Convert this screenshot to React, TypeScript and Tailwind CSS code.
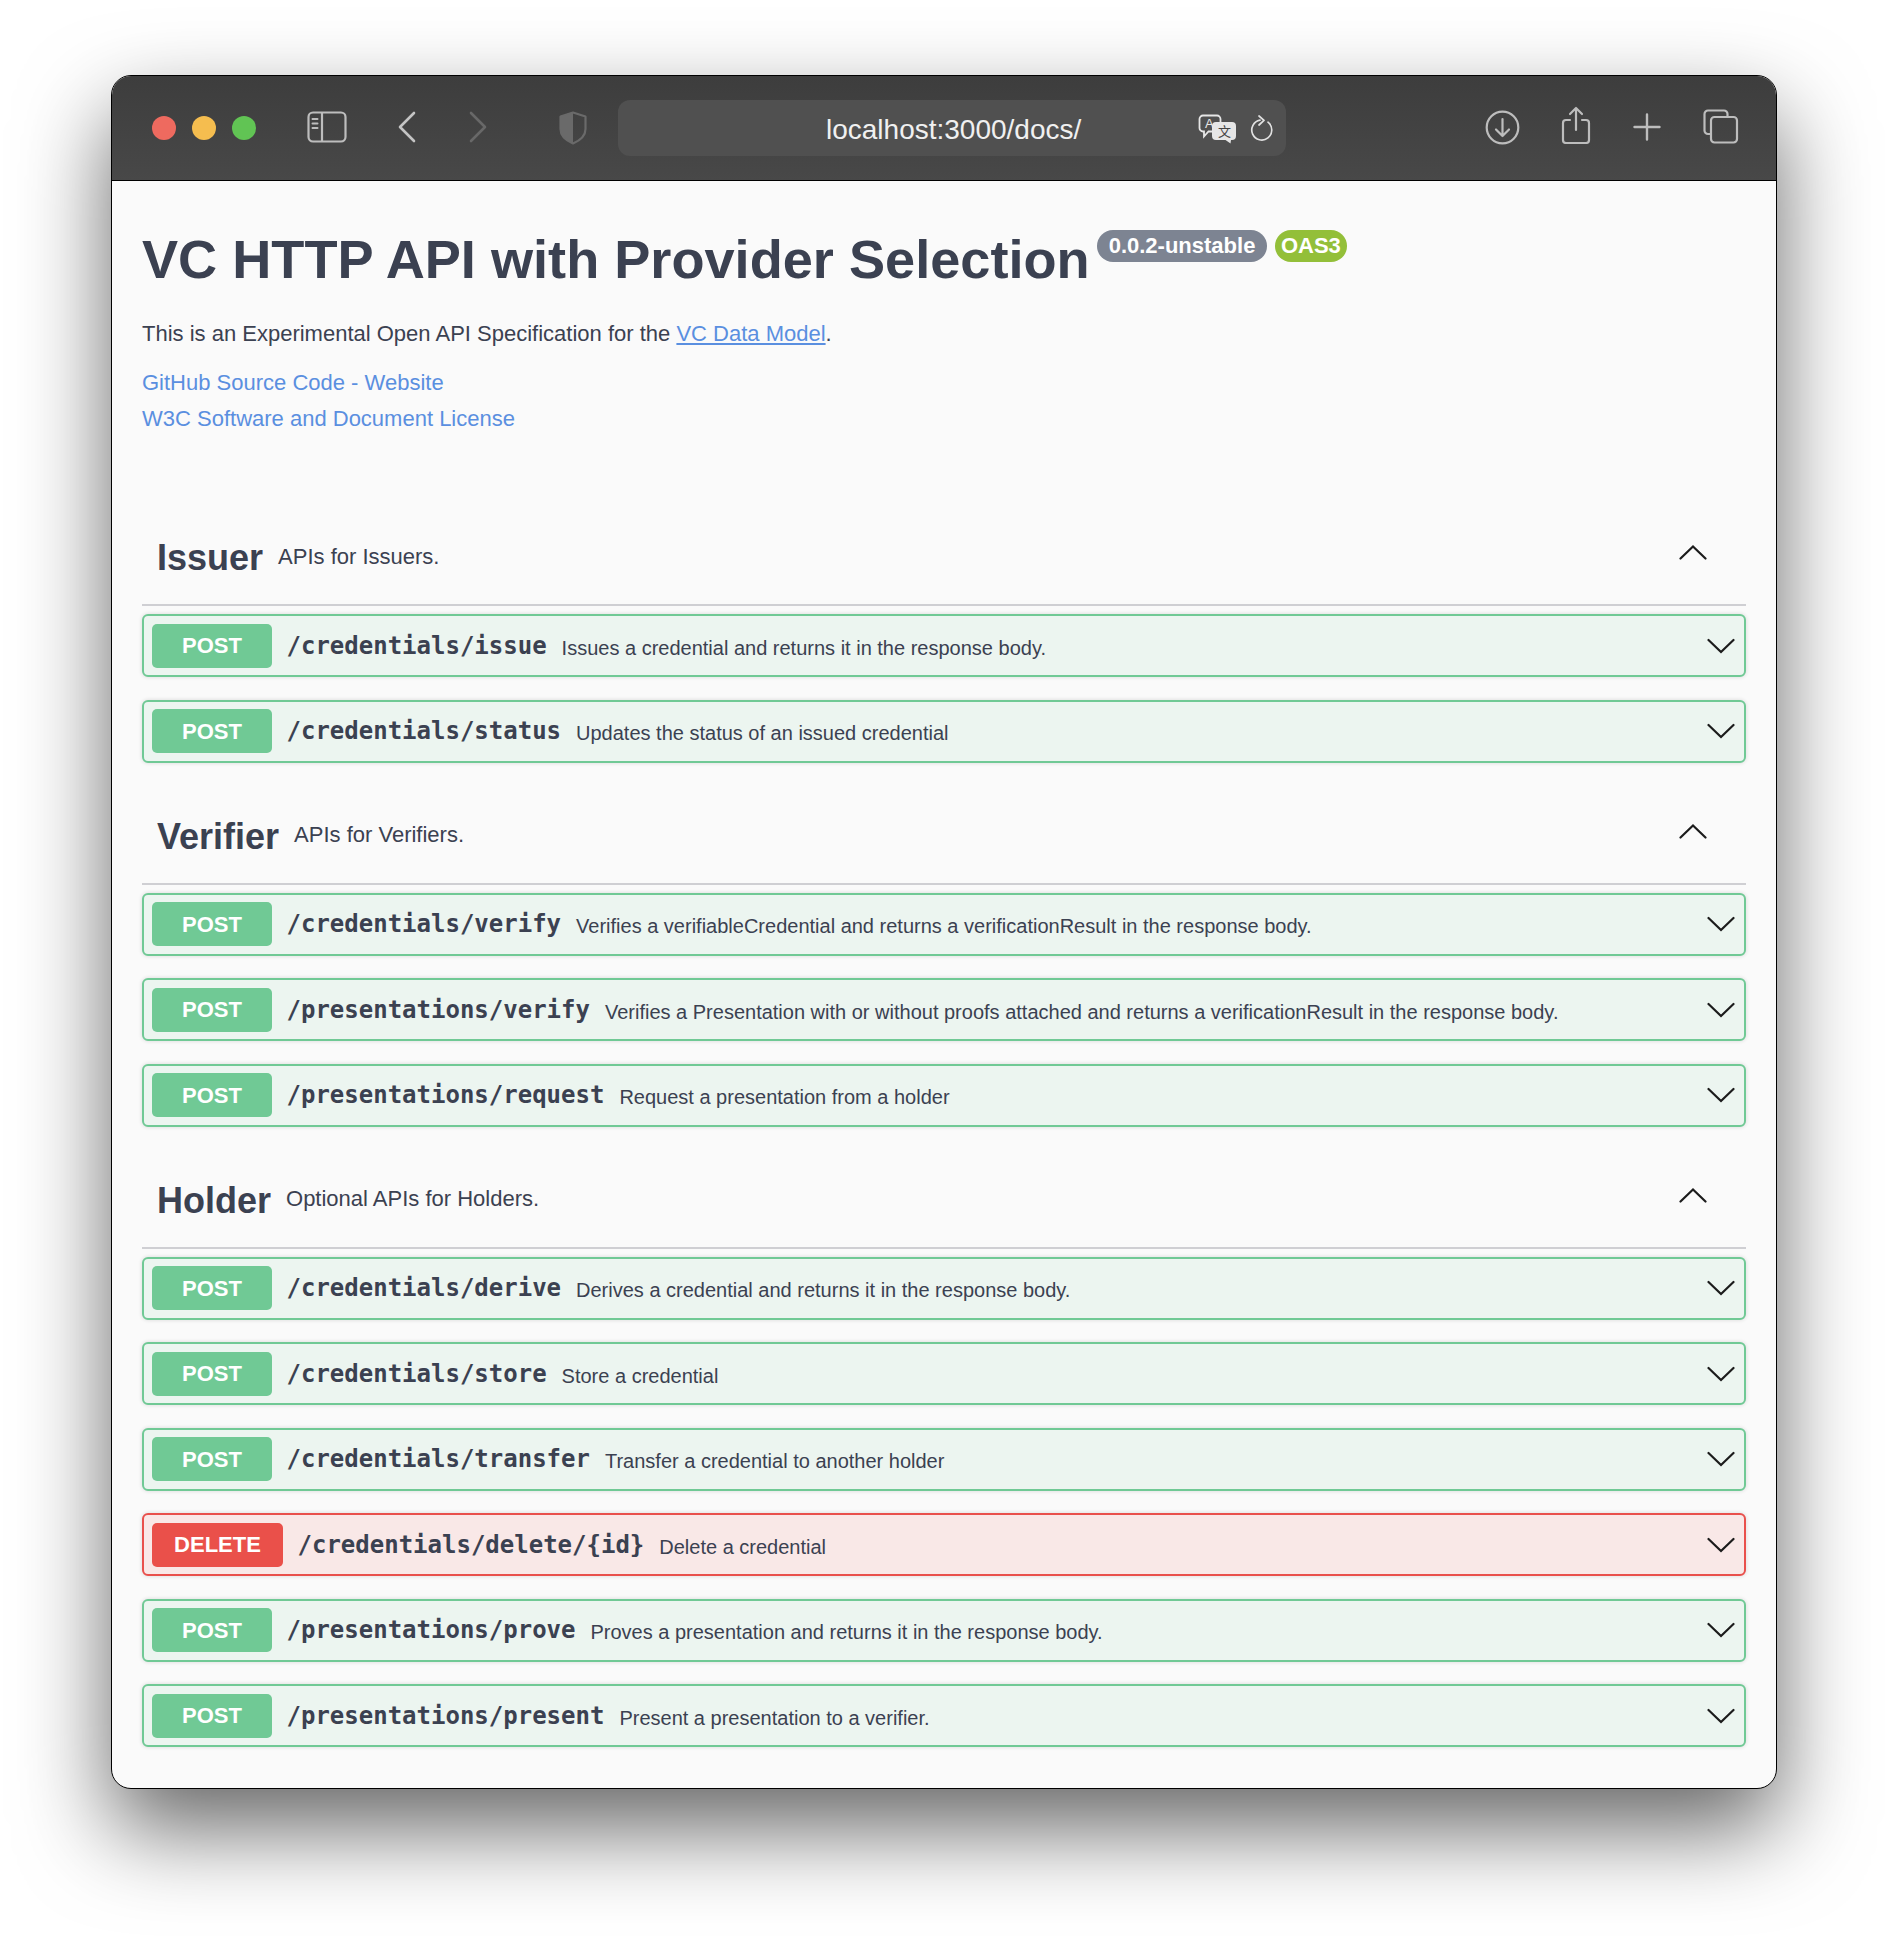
import React from "react";

const SANS = "font-['Liberation_Sans',Arial,sans-serif]";
const MONO = "font-['DejaVu_Sans_Mono',monospace]";

type Op = {
  method: "POST" | "DELETE";
  path: string;
  desc: string;
};

type Tag = {
  name: string;
  desc: string;
  ops: Op[];
};

const tags: Tag[] = [
  {
    name: "Issuer",
    desc: "APIs for Issuers.",
    ops: [
      { method: "POST", path: "/credentials/issue", desc: "Issues a credential and returns it in the response body." },
      { method: "POST", path: "/credentials/status", desc: "Updates the status of an issued credential" },
    ],
  },
  {
    name: "Verifier",
    desc: "APIs for Verifiers.",
    ops: [
      { method: "POST", path: "/credentials/verify", desc: "Verifies a verifiableCredential and returns a verificationResult in the response body." },
      { method: "POST", path: "/presentations/verify", desc: "Verifies a Presentation with or without proofs attached and returns a verificationResult in the response body." },
      { method: "POST", path: "/presentations/request", desc: "Request a presentation from a holder" },
    ],
  },
  {
    name: "Holder",
    desc: "Optional APIs for Holders.",
    ops: [
      { method: "POST", path: "/credentials/derive", desc: "Derives a credential and returns it in the response body." },
      { method: "POST", path: "/credentials/store", desc: "Store a credential" },
      { method: "POST", path: "/credentials/transfer", desc: "Transfer a credential to another holder" },
      { method: "DELETE", path: "/credentials/delete/{id}", desc: "Delete a credential" },
      { method: "POST", path: "/presentations/prove", desc: "Proves a presentation and returns it in the response body." },
      { method: "POST", path: "/presentations/present", desc: "Present a presentation to a verifier." },
    ],
  },
];

function Chevron({ up = false }: { up?: boolean }) {
  return (
    <svg width="28" height="16" viewBox="0 0 28 16" fill="none" stroke="#1c1c1c" strokeWidth="2.2" strokeLinecap="round">
      <path d={up ? "M1.5 14L14 2l12.5 12" : "M1.5 2L14 14 26.5 2"} />
    </svg>
  );
}

function ToolbarIcons() {
  return (
    <div className="flex items-center h-full">
      {/* traffic lights */}
      <div className="ml-[40px] w-[24px] h-[24px] rounded-full bg-[#ee6a5f]" />
      <div className="ml-[16px] w-[24px] h-[24px] rounded-full bg-[#f5bd4f]" />
      <div className="ml-[16px] w-[24px] h-[24px] rounded-full bg-[#61c454]" />

      {/* sidebar */}
      <svg className="ml-[51px] mb-[2px]" width="40" height="32" viewBox="0 0 40 32" fill="none" stroke="#bdbdbd" strokeWidth="2.2">
        <rect x="1.5" y="1.5" width="37" height="29" rx="4.5" />
        <path d="M15 1.5v29" />
        <path d="M5.5 8h5M5.5 12.5h5M5.5 17h5" strokeWidth="2" strokeLinecap="round" />
      </svg>

      {/* back / forward */}
      <svg className="ml-[50px] mb-[2px]" width="20" height="32" viewBox="0 0 20 32" fill="none" stroke="#c4c4c4" strokeWidth="2.6" strokeLinecap="round" strokeLinejoin="round">
        <path d="M17 2L3 16l14 14" />
      </svg>
      <svg className="ml-[50.5px] mb-[2px]" width="20" height="32" viewBox="0 0 20 32" fill="none" stroke="#686868" strokeWidth="2.6" strokeLinecap="round" strokeLinejoin="round">
        <path d="M3 2l14 14L3 30" />
      </svg>

      {/* shield */}
      <svg className="ml-[71.5px] mb-[1px]" width="28" height="34" viewBox="0 0 28 34" fill="none">
        <path d="M14 1.5L26.5 5.5V18c0 7-5.5 11.5-12.5 14.5C7 29.5 1.5 25 1.5 18V5.5z" stroke="#6a6a6a" strokeWidth="2.2" strokeLinejoin="round" />
        <path d="M14 1.5L1.5 5.5V18c0 7 5.5 11.5 12.5 14.5z" fill="#6a6a6a" />
      </svg>

      {/* address bar */}
      <div className="relative ml-[31px] w-[668px] h-[56px] rounded-[12px] bg-[#505050] flex items-center">
        <span className={`${SANS} absolute left-[208px] top-[12.5px] text-[28px] leading-[34px] text-[#f0f0f0] whitespace-nowrap`}>
          localhost:3000/docs/
        </span>
        <svg className="absolute left-[580px] top-[14px]" width="40" height="30" viewBox="0 0 40 30">
          <path d="M5 1.5h14a3.5 3.5 0 0 1 3.5 3.5v9a3.5 3.5 0 0 1-3.5 3.5H10.5L6 22.5v-5H5A3.5 3.5 0 0 1 1.5 14V5A3.5 3.5 0 0 1 5 1.5z" fill="none" stroke="#e6e6e6" strokeWidth="1.8" />
          <text x="7" y="14" fontSize="13" fill="#e6e6e6" fontFamily="Liberation Sans, sans-serif">A</text>
          <path d="M18 8h16a4 4 0 0 1 4 4v10a4 4 0 0 1-4 4h-1l-.5 3.5-5-3.5H18a4 4 0 0 1-4-4V12a4 4 0 0 1 4-4z" fill="#e6e6e6" />
          <text x="20" y="22" fontSize="13" fill="#444" fontFamily="Noto Sans CJK SC, sans-serif">文</text>
        </svg>
        <svg className="absolute left-[632px] top-[15px]" width="24" height="27" viewBox="0 0 24 27" fill="none" stroke="#e0e0e0" strokeWidth="1.7" strokeLinecap="round" strokeLinejoin="round">
          <path d="M10 5.2a10 10 0 1 0 8 2" />
          <path d="M9 1l5 4.4L9 10" />
        </svg>
      </div>

      {/* right icons */}
      <svg className="ml-[199px] mb-[2px]" width="35" height="35" viewBox="0 0 35 35" fill="none" stroke="#bdbdbd" strokeWidth="2.2" strokeLinecap="round" strokeLinejoin="round">
        <circle cx="17.5" cy="17.5" r="15.8" />
        <path d="M17.5 9v17M11 19.5l6.5 6.5 6.5-6.5" />
      </svg>
      <svg className="ml-[40.5px] mb-[6px]" width="30" height="38" viewBox="0 0 30 38" fill="none" stroke="#bdbdbd" strokeWidth="2.2" strokeLinecap="round" strokeLinejoin="round">
        <path d="M9 14H5a3 3 0 0 0-3 3v17a3 3 0 0 0 3 3h20a3 3 0 0 0 3-3V17a3 3 0 0 0-3-3h-4" />
        <path d="M15 24V2M9 8l6-6 6 6" />
      </svg>
      <svg className="ml-[42px] mb-[3px]" width="28" height="28" viewBox="0 0 28 28" fill="none" stroke="#bdbdbd" strokeWidth="2.4" strokeLinecap="round">
        <path d="M14 1.5v25M1.5 14h25" />
      </svg>
      <svg className="ml-[42.5px] mb-[3px]" width="36" height="35" viewBox="0 0 36 35" fill="none" stroke="#bdbdbd" strokeWidth="2.2">
        <path d="M7 25H5a3.5 3.5 0 0 1-3.5-3.5V5A3.5 3.5 0 0 1 5 1.5h16A3.5 3.5 0 0 1 24.5 5v2" />
        <rect x="8" y="8" width="26" height="25.5" rx="3.5" />
      </svg>
    </div>
  );
}

function OpRow({ op }: { op: Op }) {
  const isDelete = op.method === "DELETE";
  return (
    <div
      className={`h-[63px] rounded-[6px] border-2 flex items-center pl-[8px] pr-[9px] shadow-[0_0_4px_rgba(0,0,0,0.14)] ${
        isDelete ? "border-[#e9504c] bg-[#f9e8e7]" : "border-[#70c995] bg-[#ecf5f0]"
      }`}
    >
      <div
        className={`${SANS} h-[44px] rounded-[5px] flex items-center justify-center text-[22px] font-bold text-white ${
          isDelete ? "w-[131px] bg-[#ea504a]" : "w-[120px] bg-[#70c995]"
        }`}
      >
        {op.method}
      </div>
      <span className={`${MONO} ml-[14.5px] text-[24px] font-bold text-[#3b4151] whitespace-nowrap`}>{op.path}</span>
      <span className={`${SANS} ml-[15px] text-[20px] text-[#3b4151] whitespace-nowrap flex-1 translate-y-[2px]`}>{op.desc}</span>
      <Chevron />
    </div>
  );
}

function TagSection({ tag }: { tag: Tag }) {
  return (
    <section className="pt-[23.5px] pb-[22.5px]">
      <div className="h-[76px] border-b-2 border-[#cfcfd3] flex items-center pl-[15px] pr-[39px] pb-[18px]">
        <h4 className={`${SANS} text-[36px] font-bold text-[#3b4151]`}>{tag.name}</h4>
        <span className={`${SANS} ml-[15px] text-[22px] text-[#3b4151] flex-1 -translate-y-[2px]`}>{tag.desc}</span>
        <div className="-translate-y-[5.5px]">
          <Chevron up />
        </div>
      </div>
      <div className="mt-[8px] flex flex-col gap-[22.5px]">
        {tag.ops.map((op) => (
          <OpRow key={op.path} op={op} />
        ))}
      </div>
    </section>
  );
}

export default function App() {
  return (
    <div className="w-[1888px] h-[1936px] bg-white pl-[111px] pt-[75px] overflow-hidden">
      <div className="w-[1666px] h-[1714px] rounded-[20px] border border-black overflow-hidden shadow-[0_40px_90px_rgba(0,0,0,0.6)] bg-[#fafafa]">
        <div className="h-[105px] border-b border-black bg-gradient-to-b from-[#3d3d3d] to-[#484848]">
          <ToolbarIcons />
        </div>

        <div className="pl-[30px] pr-[30px]">
          <div className="pt-[48px] flex items-start">
            <h1 className={`${SANS} text-[54.15px] leading-[60px] font-bold text-[#3b4151] whitespace-nowrap`}>
              VC HTTP API with Provider Selection
            </h1>
            <span className={`${SANS} ml-[7px] mt-[1px] h-[32px] pl-[12px] pr-[12px] pb-[2px] rounded-full bg-[#7d8492] flex items-center text-[22px] font-bold text-white`}>
              0.0.2-unstable
            </span>
            <span className={`${SANS} ml-[7.5px] mt-[1px] h-[32px] px-[6px] pb-[2px] rounded-full bg-[#93bf39] flex items-center text-[22px] font-bold text-white`}>
              OAS3
            </span>
          </div>

          <p className={`${SANS} mt-[29.5px] text-[22px] leading-[30px] text-[#3b4151]`}>
            This is an Experimental Open API Specification for the{" "}
            <a className="text-[#5a8fe0] underline">VC Data Model</a>.
          </p>
          <div className={`${SANS} mt-[19.5px] flex flex-col gap-[5.5px] text-[22px] leading-[30px] text-[#5a8fe0]`}>
            <a>GitHub Source Code - Website</a>
            <a>W3C Software and Document License</a>
          </div>

          <div className="mt-[73px]">
            {tags.map((tag) => (
              <TagSection key={tag.name} tag={tag} />
            ))}
          </div>
        </div>
      </div>
    </div>
  );
}
